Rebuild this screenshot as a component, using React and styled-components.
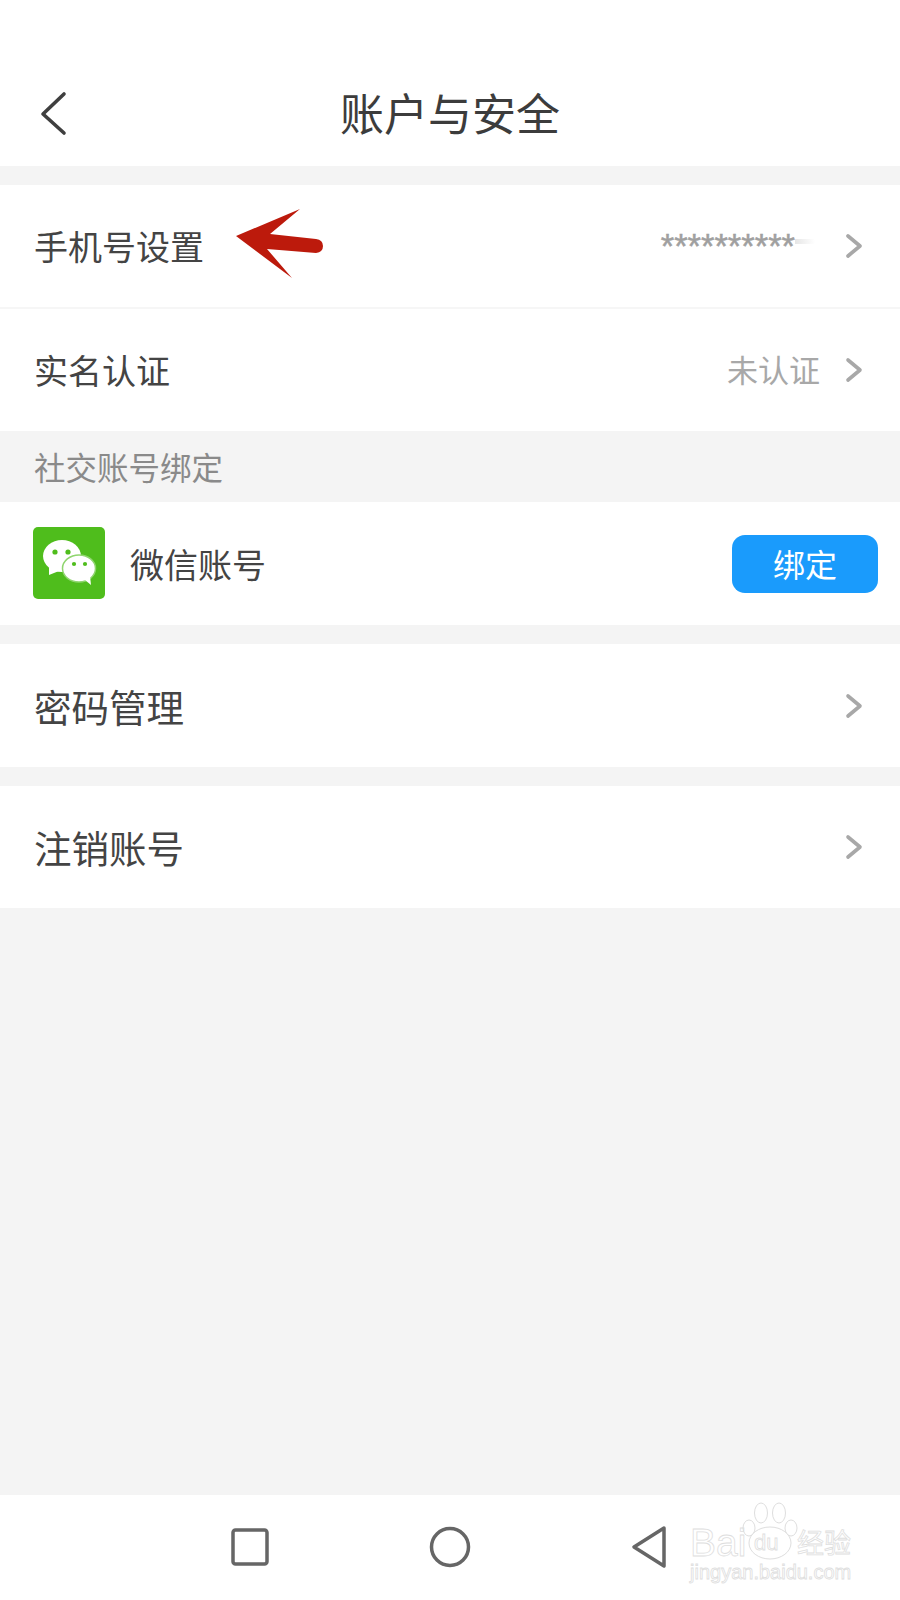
import React from "react";
import styled, { createGlobalStyle } from "styled-components";

const GlobalStyle = createGlobalStyle`
  html, body {
    margin: 0;
    padding: 0;
    background: #f4f4f4;
  }
  body {
    font-family: "Noto Sans CJK SC", "Noto Sans", sans-serif;
  }
`;

const Page = styled.div`
  width: 900px;
  height: 1600px;
  display: flex;
  flex-direction: column;
  background: #f4f4f4;
  color: #3a3a3a;
  overflow: hidden;
`;

const Header = styled.header`
  height: 166px;
  flex: none;
  background: #fff;
  box-sizing: border-box;
  padding-top: 62px;
  position: relative;
  text-align: center;
`;

const Title = styled.h1`
  margin: 0;
  font-size: 44px;
  line-height: 100px;
  font-weight: 400;
  color: #3c3c3c;
`;

const BackIcon = styled.svg`
  position: absolute;
  left: 38px;
  top: 89px;
`;

const Group = styled.section`
  margin-top: ${(p) => p.$gap || 0}px;
  background: #fff;
  display: flex;
  flex-direction: column;
`;

const Row = styled.div`
  height: ${(p) => p.$h || 122}px;
  flex: none;
  box-sizing: border-box;
  display: flex;
  align-items: center;
  padding: 0 37px 0 34px;
  position: relative;
  border-bottom: ${(p) => (p.$line ? "2px solid #f6f6f6" : "none")};
`;

const Label = styled.span`
  font-size: ${(p) => p.$size || 34}px;
  line-height: 1;
  color: #444;
`;

const Value = styled.span`
  margin-left: auto;
  margin-right: 25px;
  font-size: 31px;
  line-height: 1;
  color: #a8a8a8;
  position: relative;
  top: -2px;
`;

const Masked = styled.span`
  margin-left: auto;
  margin-right: 50px;
  font-family: "Liberation Sans", sans-serif;
  font-size: 34.5px;
  line-height: 1;
  color: #a0a0a0;
  -webkit-text-stroke: 0.5px #a0a0a0;
  position: relative;
  &::after {
    content: "";
    position: absolute;
    left: 100%;
    top: 10px;
    width: 20px;
    height: 5px;
    background: linear-gradient(to right, #e6e6e6, #ffffff);
    -webkit-text-stroke: 0;
  }
`;

const Chevron = styled.svg`
  flex: none;
`;

const ChevronPush = styled(Chevron)`
  margin-left: auto;
`;

const SectionTitle = styled.div`
  height: 71px;
  flex: none;
  box-sizing: border-box;
  padding: 0 0 2px 34px;
  display: flex;
  align-items: center;
  font-size: 31.5px;
  color: #8a8a8a;
`;

const WeChatLogo = styled.svg`
  flex: none;
  margin: -2px 25px 0 -1px;
`;

const BindButton = styled.button`
  margin-left: auto;
  margin-right: -15px;
  width: 146px;
  height: 58px;
  border: none;
  border-radius: 13px;
  background: #1a9bfc;
  color: #fff;
  font-family: inherit;
  font-size: 32px;
  padding: 0 0 2px;
`;

const Spacer = styled.div`
  flex: 1;
`;

const NavBar = styled.nav`
  height: 105px;
  flex: none;
  background: #fff;
  position: relative;
  display: flex;
  align-items: center;
  box-sizing: border-box;
  padding: 0 0 2px 0;
`;

const NavIcon = styled.svg`
  flex: none;
  margin-left: ${(p) => p.$left}px;
`;

const Arrow = styled.svg`
  position: absolute;
  left: 230px;
  top: 21px;
`;

const Watermark = styled.div`
  position: absolute;
  left: 688px;
  top: 6px;
  width: 170px;
  height: 90px;
`;

const Paw = styled.svg`
  position: absolute;
  left: 51px;
  top: 0;
`;

const OutlineText = styled.span`
  position: absolute;
  left: ${(p) => p.$left}px;
  top: ${(p) => p.$top}px;
  font-family: ${(p) => (p.$cjk ? "inherit" : '"Liberation Sans", sans-serif')};
  font-size: ${(p) => p.$size}px;
  line-height: 1;
  color: transparent;
  -webkit-text-stroke: 0.8px #dedede;
  white-space: nowrap;
`;

const RowChevron = ({ push }) => {
  const Icon = push ? ChevronPush : Chevron;
  return (
    <Icon width="18" height="26" viewBox="0 0 18 26">
      <path d="M3 3l12 10L3 23" fill="none" stroke="#a8a8a8" strokeWidth="3.6" strokeLinecap="round" strokeLinejoin="round" />
    </Icon>
  );
};

export default function App() {
  return (
    <Page>
      <GlobalStyle />
      <Header>
        <BackIcon width="32" height="48" viewBox="0 0 32 48">
          <path d="M26 5L5 25l21 19" fill="none" stroke="#3f3f3f" strokeWidth="3.6" strokeLinecap="round" strokeLinejoin="round" />
        </BackIcon>
        <Title>账户与安全</Title>
      </Header>

      <Group $gap={19}>
        <Row $h={124} $line>
          <Label>手机号设置</Label>
          <Arrow width="95" height="74" viewBox="0 0 95 74">
            <path d="M6 30L70 3 L40 28 L86 33 Q93 34 93 40 Q93 46 86 47 L37 43 L62 72 Z" fill="#bc1a0c" />
          </Arrow>
          <Masked>**********</Masked>
          <RowChevron />
        </Row>
        <Row $h={122}>
          <Label>实名认证</Label>
          <Value>未认证</Value>
          <RowChevron />
        </Row>
      </Group>

      <SectionTitle>社交账号绑定</SectionTitle>

      <Group>
        <Row $h={123}>
          <WeChatLogo width="72" height="72" viewBox="0 0 72 72">
            <rect width="72" height="72" rx="5" fill="#4fbd1c" />
            <ellipse cx="29" cy="29" rx="19" ry="16" fill="#fff" />
            <path d="M16 40l0 8 10-4z" fill="#fff" />
            <ellipse cx="46" cy="41.5" rx="16.5" ry="13.5" fill="#fff" stroke="#8fd56e" strokeWidth="1.5" />
            <path d="M52 53l6 5-1-9z" fill="#fff" />
            <circle cx="22" cy="25" r="2.6" fill="#4fbd1c" />
            <circle cx="35" cy="25" r="2.6" fill="#4fbd1c" />
            <circle cx="41" cy="37" r="2.1" fill="#4fbd1c" />
            <circle cx="52" cy="37" r="2.1" fill="#4fbd1c" />
          </WeChatLogo>
          <Label>微信账号</Label>
          <BindButton>绑定</BindButton>
        </Row>
      </Group>

      <Group $gap={19}>
        <Row $h={123}>
          <Label $size={37.5}>密码管理</Label>
          <RowChevron push />
        </Row>
      </Group>

      <Group $gap={19}>
        <Row $h={122}>
          <Label $size={37.5}>注销账号</Label>
          <RowChevron push />
        </Row>
      </Group>

      <Spacer />

      <NavBar>
        <NavIcon $left={231} width="38" height="38" viewBox="0 0 38 38">
          <rect x="2" y="2" width="34" height="34" rx="2.5" fill="none" stroke="#666" strokeWidth="3.5" />
        </NavIcon>
        <NavIcon $left={160} width="42" height="42" viewBox="0 0 42 42">
          <circle cx="21" cy="21" r="18.5" fill="none" stroke="#666" strokeWidth="3.5" />
        </NavIcon>
        <NavIcon $left={160} width="36" height="44" viewBox="0 0 36 44">
          <path d="M33 3L3 22l30 19z" fill="none" stroke="#666" strokeWidth="3.5" strokeLinejoin="round" />
        </NavIcon>
        <Watermark>
          <Paw width="62" height="60" viewBox="0 0 62 60">
            <g fill="#fff" stroke="#dedede" strokeWidth="1">
              <ellipse cx="10" cy="27" rx="6" ry="8" />
              <ellipse cx="22" cy="12" rx="6.5" ry="10" />
              <ellipse cx="40" cy="12" rx="6.5" ry="10" />
              <ellipse cx="52" cy="27" rx="6" ry="8" />
              <ellipse cx="31" cy="42" rx="21" ry="16" />
            </g>
          </Paw>
          <OutlineText $left={2} $top={22} $size={39}>Bai</OutlineText>
          <OutlineText $left={66} $top={31} $size={22}>du</OutlineText>
          <OutlineText $left={109} $top={27} $size={27} $cjk>经验</OutlineText>
          <OutlineText $left={2} $top={61} $size={20}>jingyan.baidu.com</OutlineText>
        </Watermark>
      </NavBar>
    </Page>
  );
}
